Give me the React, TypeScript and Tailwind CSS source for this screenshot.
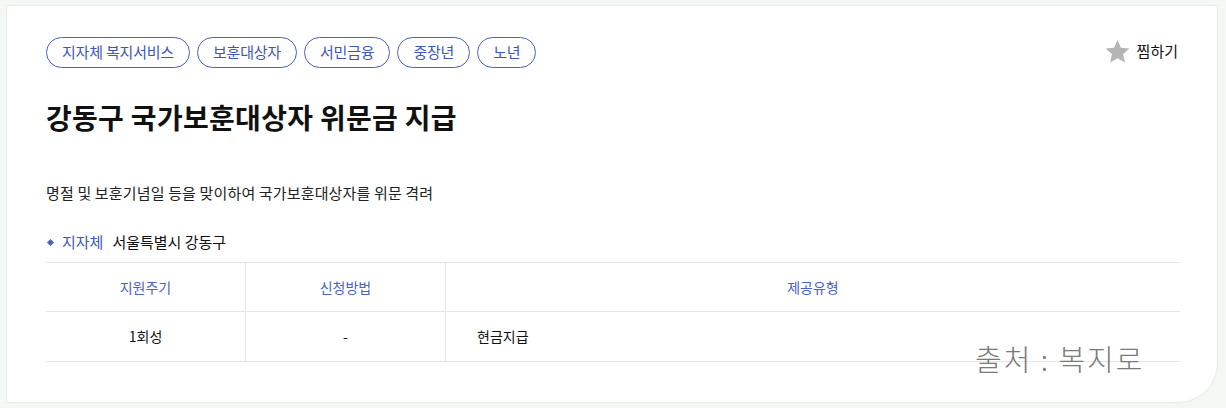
const font = "font-['Noto_Sans_CJK_KR','Noto_Sans',sans-serif]";

function Tag({ label }: { label: string }) {
  return (
    <span className="inline-flex h-[31px] items-center rounded-full border border-[#4b5fc4] px-[15px] text-[15px] tracking-[-0.2px] text-[#3d55c0]">
      {label}
    </span>
  );
}

export default function App() {
  const tags = ["지자체 복지서비스", "보훈대상자", "서민금융", "중장년", "노년"];
  return (
    <div className={`min-h-screen bg-[#f3f8f5] pt-[5px] pr-[8px] pb-[5px] pl-[6px] ${font}`}>
      <div className="relative h-[398px] rounded-br-[40px] border border-[#e6eee8] bg-white pt-[31px] pr-[37px] pl-[39px]">
        <div className="flex items-start justify-between">
          <div className="flex gap-[7px]">
            {tags.map((t) => (
              <Tag key={t} label={t} />
            ))}
          </div>
          <button className="mt-[1px] mr-[2px] flex items-center gap-[6px] text-[15px] text-[#111]">
            <svg width="27" height="27" viewBox="0 0 24 24" fill="#b5b5b5">
              <path d="M12 1.8l3.1 6.9 7.4.7-5.6 5 1.7 7.4L12 18l-6.6 3.8 1.7-7.4-5.6-5 7.4-.7z" />
            </svg>
            찜하기
          </button>
        </div>

        <h1 className="mt-[29px] text-[28px] leading-[40px] font-bold tracking-[0.3px] text-[#111]">
          강동구 국가보훈대상자 위문금 지급
        </h1>

        <p className="mt-[45px] text-[15px] leading-[22px] tracking-[0.15px] text-[#222]">
          명절 및 보훈기념일 등을 맞이하여 국가보훈대상자를 위문 격려
        </p>

        <div className="mt-[27px] flex items-center text-[15px] leading-[22px]">
          <span className="ml-[2px] mr-[9px] h-[5px] w-[5px] rotate-45 bg-[#4b5fc4]" />
          <span className="mr-[9px] text-[#3d55c0]">지자체</span>
          <span className="text-[#111]">서울특별시 강동구</span>
        </div>

        <div className="mt-[9px] border-t border-[#e5e5e5] text-[14px]">
          <div className="grid h-[49px] grid-cols-[200px_200px_1fr] border-b border-[#e5e5e5] text-[#4a63c8]">
            <div className="flex items-center justify-center border-r border-[#e5e5e5]">지원주기</div>
            <div className="flex items-center justify-center border-r border-[#e5e5e5]">신청방법</div>
            <div className="flex items-center justify-center">제공유형</div>
          </div>
          <div className="grid h-[50px] grid-cols-[200px_200px_1fr] border-b border-[#e5e5e5] text-[#111]">
            <div className="flex items-center justify-center border-r border-[#e5e5e5]">1회성</div>
            <div className="flex items-center justify-center border-r border-[#e5e5e5]">-</div>
            <div className="flex items-center pl-[31px]">현금지급</div>
          </div>
        </div>

        <div className="absolute top-[332px] left-[968px] text-[29px] leading-[40px] font-light tracking-[2px] text-[#7a7a7a]">
          출처 : 복지로
        </div>
      </div>
    </div>
  );
}
